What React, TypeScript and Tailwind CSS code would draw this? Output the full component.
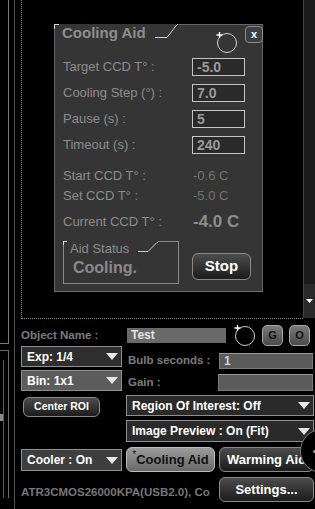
import React from "react";

function Tri({ w = 12, h = 7, color = "#e8e8e8" }: { w?: number; h?: number; color?: string }) {
  return (
    <svg width={w} height={h} viewBox={`0 0 ${w} ${h}`} className="shrink-0">
      <polygon points={`0,0 ${w},0 ${w / 2},${h}`} fill={color} />
    </svg>
  );
}

function Ring() {
  return (
    <svg width="21" height="21" viewBox="0 0 21 21" className="shrink-0 overflow-visible">
      <circle cx="11" cy="11" r="9.5" fill="none" stroke="#cfcfcf" strokeWidth="1" />
      <path d="M3.5 0v6M0.5 3h6" stroke="#ffffff" strokeWidth="1.3" />
    </svg>
  );
}

function Drop({ label, className }: { label: string; className: string }) {
  return (
    <div
      className={`flex items-center justify-between border border-[#8f8f8f] pl-[5px] pr-[3px] text-[12px] font-bold text-white ${className}`}
    >
      <span>{label}</span>
      <Tri />
    </div>
  );
}

function Btn({ children, className }: { children: React.ReactNode; className: string }) {
  return (
    <div
      className={`flex items-center justify-center rounded-[6px] border border-[#8a8a8a] bg-linear-to-b from-[#4d4d4d] to-[#1c1c1c] font-bold text-white ${className}`}
    >
      {children}
    </div>
  );
}

function Field({ label, value }: { label: string; value: string }) {
  return (
    <div className="flex h-[26px] items-center pl-[8px]">
      <span className="w-[129px]">{label}</span>
      <div className="flex h-[18px] w-[53px] items-center border border-[#c4c4c4] bg-[#2a2a2a] pl-[4px] text-[14px] font-bold text-[#9a9a9a]">
        {value}
      </div>
    </div>
  );
}

function ReadOnly({ label, value, big }: { label: string; value: string; big?: boolean }) {
  return (
    <div className="flex h-[20px] items-center pl-[8px]">
      <span className="w-[130px]">{label}</span>
      <span className={big ? "text-[17px] font-bold text-[#8c8c8c]" : "text-[#727272]"}>{value}</span>
    </div>
  );
}

function CoolingAid() {
  return (
    <div className="ml-[32px] mt-[24px] flex h-[268px] w-[209px] flex-col border-x border-b border-x-[#666666] border-b-[#6e6e6e] bg-[#353535] text-[13px] text-[#8c8c8c]">
      {/* title bar */}
      <div className="relative flex h-[18px] items-start">
        <div className="absolute left-[-1px] top-0 h-[5px] w-[5px] border-l border-t border-[#d8d8d8]" />
        <span className="w-[100px] shrink-0 pl-[7px] text-[15px] font-bold leading-[18px] text-[#8d8d8d]">
          Cooling Aid
        </span>
        <svg width="23" height="14" className="shrink-0">
          <polyline points="0,13.5 12,13.5 22,0.5 23,0.5" fill="none" stroke="#cfcfcf" strokeWidth="1" />
        </svg>
        <div className="flex flex-1 justify-end border-t border-[#666666]">
          <div className="mt-[7px]">
            <Ring />
          </div>
          <div className="mr-[-1px] ml-[8px] mt-[1px] flex h-[17px] w-[18px] items-center justify-center rounded-[4px] border border-[#8a8a8a] bg-[#3b3e44] text-[11px] font-bold leading-none text-white">
            x
          </div>
        </div>
      </div>

      <div className="mt-[12px]">
        <Field label="Target CCD T° :" value="-5.0" />
        <Field label="Cooling Step (°) :" value="7.0" />
        <Field label="Pause (s) :" value="5" />
        <Field label="Timeout (s) :" value="240" />
      </div>

      <div className="mt-[8px]">
        <ReadOnly label="Start CCD T° :" value="-0.6 C" />
        <ReadOnly label="Set CCD T° :" value="-5.0 C" />
      </div>
      <div className="mt-[6px]">
        <ReadOnly label="Current CCD T° :" value="-4.0 C" big />
      </div>

      <div className="mt-[9px] flex pl-[8px]">
        <div className="relative h-[43px] w-[116px] border-x border-b border-[#8a8a8a]">
          <div className="absolute left-[-1px] top-0 h-[4px] w-[4px] border-l border-t border-[#dddddd]" />
          <div className="flex h-[16px] items-start">
            <span className="w-[74px] shrink-0 pl-[6px] leading-[16px]">Aid Status</span>
            <svg width="20" height="10" className="mt-[1px] shrink-0">
              <polyline points="0,9.5 10,9.5 19,0.5 20,0.5" fill="none" stroke="#cfcfcf" strokeWidth="1" />
            </svg>
            <div className="flex-1 border-t border-[#8a8a8a]" />
          </div>
          <div className="flex h-[22px] items-center pl-[9px] text-[16px] font-bold text-[#8a8a8a]">Cooling.</div>
        </div>
        <Btn className="ml-[13px] mt-[12px] h-[27px] w-[59px] text-[15px]">Stop</Btn>
      </div>
    </div>
  );
}

export default function App() {
  return (
    <div className="relative flex h-[509px] w-[315px] overflow-hidden bg-black font-['Liberation_Sans',Arial,sans-serif]">
      {/* left strip */}
      <div className="flex w-[9px] shrink-0 flex-col">
        <div className="h-[344px] border-b border-r border-[#7a7a7a]" />
        <div className="mt-[6px] flex h-[148px] border-r border-t border-[#6a6a6a]">
          <div className="w-[3px]">
            <div className="mt-[63px] h-[7px] w-[3px] bg-[#8a8a8a]" />
          </div>
          <div className="mt-[9px] h-[138px] w-[1px] bg-[#5a5a5a]" />
        </div>
      </div>
      <div className="w-[5px] shrink-0" />
      <div className="h-full w-[1px] shrink-0 bg-[#525252]" />

      {/* main */}
      <div className="flex w-[300px] flex-col pl-[6px]">
        <div className="flex h-[319px]">
          <div className="flex-1 border-b border-l border-dotted border-[#8a8a8a]">
            <CoolingAid />
          </div>
          <div className="flex h-[318px] w-[12px] flex-col border-l border-[#454545] bg-[#1b1b1b]">
            <div className="mt-auto flex h-[34px] items-center justify-center bg-[#2a2a2a]">
              <Tri w={7} h={4} color="#ffffff" />
            </div>
          </div>
        </div>

        {/* controls */}
        <div className="mt-[5px] flex">
          <div className="flex w-[101px] shrink-0 flex-col">
            <div className="h-[22px] text-[11.5px] font-bold leading-[22px] text-[#7c7c7c]">Object Name :</div>
            <Drop label="Exp: 1/4" className="h-[21px] bg-[#2e2e2e]" />
            <Drop label="Bin: 1x1" className="mt-[3px] h-[21px] bg-[#5c5c5c]" />
          </div>
          <div className="ml-[4px] flex w-[188px] flex-col">
            <div className="flex h-[22px] items-center">
              <div className="ml-[1px] flex h-[15px] w-[99px] items-center bg-[#6a6a6a] pl-[4px] text-[12px] font-bold text-[#e2e2e2]">
                Test
              </div>
              <div className="ml-[8px]">
                <Ring />
              </div>
              <div className="ml-[7px] flex h-[21px] w-[21px] items-center justify-center rounded-[5px] border border-[#a8a8a8] bg-linear-to-b from-[#7a7a7a] to-[#4a4a4a] text-[11px] font-bold text-[#111111]">
                G
              </div>
              <div className="ml-[6px] flex h-[21px] w-[21px] items-center justify-center rounded-[5px] border border-[#a8a8a8] bg-linear-to-b from-[#7a7a7a] to-[#4a4a4a] text-[11px] font-bold text-[#111111]">
                O
              </div>
            </div>
            <div className="mt-[7px] flex h-[16px] items-center">
              <span className="w-[93px] shrink-0 pl-[2px] text-[11.5px] font-bold text-[#7c7c7c]">Bulb seconds :</span>
              <div className="mr-[1px] flex h-full flex-1 items-center border border-[#7a7a7a] border-t-[#9a9a9a] bg-[#5a5a5a] pl-[4px] text-[12px] font-bold text-[#d2d2d2]">
                1
              </div>
            </div>
            <div className="mt-[5px] flex h-[17px] items-center">
              <span className="w-[92px] shrink-0 pl-[2px] text-[11.5px] font-bold text-[#7c7c7c]">Gain :</span>
              <div className="mr-[1px] h-full flex-1 border border-[#7a7a7a] border-t-[#9a9a9a] bg-[#5a5a5a]" />
            </div>
          </div>
        </div>

        <div className="mt-[4px] flex">
          <div className="w-[101px] shrink-0">
            <Btn className="ml-[2px] mt-[2px] h-[20px] w-[77px] text-[10.5px]">Center ROI</Btn>
          </div>
          <div className="ml-[4px] flex w-[188px] flex-col">
            <Drop label="Region Of Interest: Off" className="h-[21px] bg-[#2a2a2a]" />
            <Drop label="Image Preview : On (Fit)" className="mt-[4px] h-[22px] bg-[#2a2a2a]" />
          </div>
        </div>

        <div className="mt-[5px] flex h-[25px]">
          <Drop label="Cooler : On" className="mt-[2px] h-[22px] w-[101px] shrink-0 bg-[#3e3e3e]" />
          <div className="ml-[4px] flex h-[25px] w-[89px] shrink-0 items-center justify-center rounded-[6px] border border-[#bdbdbd] bg-linear-to-b from-[#9c9c9c] to-[#686868] text-[13px] font-bold text-[#111111]">
            <span className="relative -top-[5px] text-[10px] font-normal">*</span>
            <span>Cooling Aid</span>
          </div>
          <Btn className="ml-[4px] h-[25px] w-[95px] shrink-0 text-[13px]">Warming Aid</Btn>
        </div>

        <div className="mt-[5px] flex h-[25px]">
          <div className="w-[192px] shrink-0 whitespace-nowrap pt-[7px] text-[11.5px] font-bold leading-[16px] text-[#777777]">
            ATR3CMOS26000KPA(USB2.0), Co
          </div>
          <Btn className="ml-[6px] h-[25px] w-[95px] shrink-0 text-[13px]">Settings...</Btn>
        </div>
      </div>

      {/* knob overlapping the right edge */}
      <div className="absolute left-[300px] top-[429px] h-[44px] w-[44px] rounded-full border border-[#7a7a7a] bg-black">
        <div className="absolute left-[12px] top-[20px] h-[3px] w-[3px] rounded-full bg-[#9a9a9a]" />
      </div>
    </div>
  );
}
